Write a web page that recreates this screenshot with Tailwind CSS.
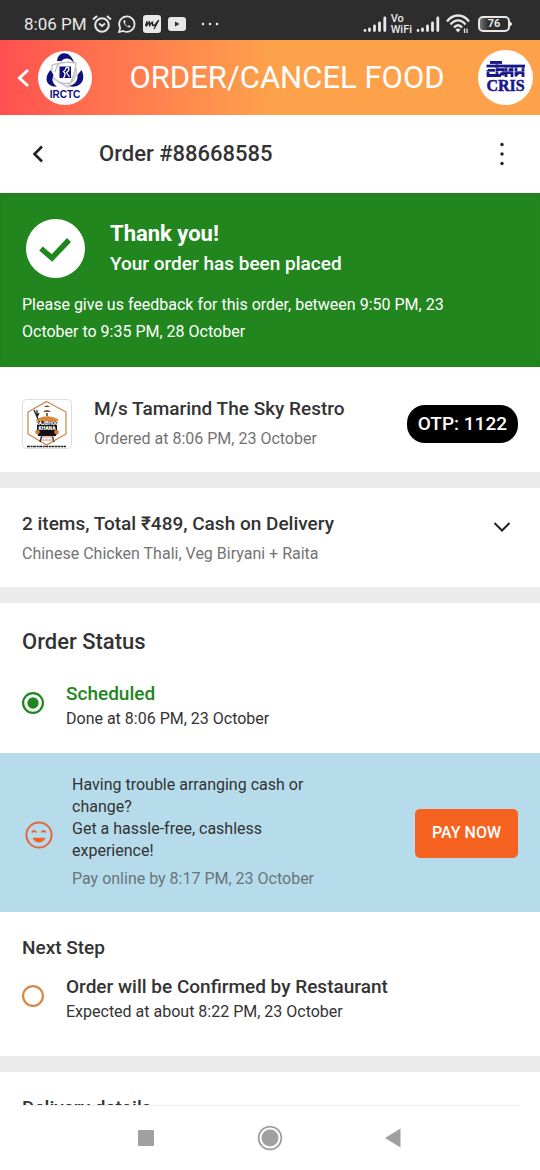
<!DOCTYPE html>
<html lang="en">
<head>
<meta charset="utf-8">
<meta name="viewport" content="width=device-width, initial-scale=1">
<title>Order #88668585</title>
<script src="https://cdn.jsdelivr.net/npm/@tailwindcss/browser@4"></script>
</head>
<body class="flex h-screen flex-col overflow-hidden bg-white font-['Roboto',sans-serif] text-base text-[#333]">

<div class="flex h-10 shrink-0 items-center justify-between bg-[#2d2d2d] pt-2 pr-7 pl-6 text-[#e8e8e8]">
  <div class="flex items-center gap-[5px]">
    <span class="text-[17px] leading-6">8:06 PM</span>
    <svg class="h-5 w-5" viewBox="0 0 20 20" fill="none" stroke="currentColor" stroke-width="2"><circle cx="10" cy="11" r="6.8"/><path d="M1 5.500 5 2M19 5.500 15 2"/><path d="M7 9.500 10 12 13 9.500" stroke-width="1.800"/></svg>
    <svg class="h-5 w-5" viewBox="0 0 20 20" fill="none" stroke="currentColor" stroke-width="1.700"><path d="M2 18 3.200 14A7.700 7.700 0 1 1 6.200 16.900Z"/><path d="M7.200 6C5.500 7.500 7 10 8.700 11.600C10.500 13.300 12.700 14.300 13.900 12.600L11.900 11.200 10.900 12.100C9.500 11.500 8.500 10.500 7.900 9.200L8.600 8.200 8 6Z" fill="currentColor" stroke="none"/></svg>
    <svg class="h-5 w-5" viewBox="0 0 20 20"><rect x="1" y="1" width="18" height="18" rx="3" fill="#e8e8e8"/><path d="M3.500 12 5 7.500 4.500 12 7.500 7.500 7.500 12 10 8M10.500 7.500 10.500 11.500 13 11 16.500 6.500 12 15" fill="none" stroke="#222" stroke-width="1.300" stroke-linejoin="round"/></svg>
    <svg class="h-5 w-5" viewBox="0 0 20 20"><rect x="1" y="3" width="18" height="14" rx="3" fill="#e8e8e8"/><path d="M8 7.500 12.500 10 8 12.500Z" fill="#2d2d2d"/></svg>
    <svg class="ml-2 h-5 w-5" viewBox="0 0 20 20" fill="currentColor"><circle cx="3" cy="10" r="1.300"/><circle cx="10" cy="10" r="1.300"/><circle cx="17" cy="10" r="1.300"/></svg>
  </div>
  <div class="flex items-center gap-1">
    <svg class="h-5 w-6" viewBox="0 0 24 20" stroke="currentColor" stroke-width="2.800" stroke-linecap="round"><path d="M2 16.500v.1M6.500 16.500v-1.500M11.500 16.500v-4.500M16.500 16.500V9M21.800 16.500V4"/></svg>
    <div class="flex flex-col text-[11px] leading-[11px] font-medium"><span>Vo</span><span>WiFi</span></div>
    <svg class="h-5 w-6" viewBox="0 0 24 20" stroke="currentColor" stroke-width="2.800" stroke-linecap="round"><path d="M2 16.500v.1M6.500 16.500v-1.500M11.500 16.500v-4.500M16.500 16.500V9M21.800 16.500V4"/></svg>
    <svg class="ml-0.5 h-5 w-6" viewBox="0 0 24 20" fill="none" stroke="currentColor" stroke-width="2.300"><path d="M1 7.500C7-.500 17-.500 23 7.500M4.500 10.500C9 5 15 5 19.500 10.500M8 13.500C10.500 10.500 13.500 10.500 16 13.500"/><path d="M9.500 15.500Q12 13.500 14.500 15.500L12 18.500Z" fill="currentColor" stroke="none"/><path d="M18.500 14.500v4.500M21 14.500v4.500" stroke-width="1.300"/></svg>
    <div class="ml-1 flex items-center"><span class="flex h-4 w-8 items-center justify-center rounded-[5px] border-2 border-[#e8e8e8] bg-gradient-to-r from-[#777] to-[#2d2d2d] to-30% text-[11px] leading-3 font-bold">76</span><span class="h-1 w-0.5 rounded-r bg-[#e8e8e8]"></span></div>
  </div>
</div>

<header class="flex h-[75px] shrink-0 items-center bg-gradient-to-r from-[#ff4f4f] to-[#fda14b] to-50% pr-[7px] pl-4 text-white">
  <button aria-label="Back" class="shrink-0"><svg class="h-5 w-4" viewBox="0 0 16 20" fill="none" stroke="currentColor" stroke-width="3"><path d="M12 2 3.500 10 12 18"/></svg></button>
  <svg class="ml-1.5 h-[54px] w-[54px] shrink-0" viewBox="0 0 54 54" role="img" aria-label="IRCTC">
    <circle cx="27" cy="27" r="27" fill="#fff"/>
    <g fill="none" stroke="#c4c4ce" stroke-width="1.500"><path d="M14 14Q26 10 38 12Q37 25 30 36Q20 32 14 25Q14 19 14 14M24 10.500Q19 13 17 21M38 17Q40 24 33 32M17 28Q24 34 31 32"/></g>
    <g fill="#10107c"><path d="M19 10C20-.5 33-.5 36 12C32 6 26 6.500 23.500 10Z"/><path d="M43.500 19C49 30 41 38 31 35C37 33.500 40 30 39.500 24Z"/><path d="M12.500 19C5.500 27 8 36 19 35.500C14.500 32.500 13.500 29 15.500 24Z"/><rect x="21.500" y="15.500" width="11.500" height="11.500"/></g>
    <path d="M28 16.500H30.500Q32 19 28.500 21.500L31.500 26M28 16.500Q28 19 25.500 20.500Q28.500 23 25.500 27" fill="none" stroke="#fff" stroke-width="1.300"/>
    <text x="27" y="47" text-anchor="middle" font-family="Liberation Sans, sans-serif" font-size="10" font-weight="700" fill="#10107c">IRCTC</text>
  </svg>
  <h1 class="flex-1 pl-1 text-center text-[31px] leading-10 whitespace-nowrap">ORDER/CANCEL FOOD</h1>
  <svg class="h-[55px] w-[55px] shrink-0" viewBox="0 0 55 55" role="img" aria-label="CRIS">
    <circle cx="27.500" cy="27.500" r="27.500" fill="#fff"/>
    <g fill="none" stroke="#17178a" stroke-width="2.800"><path d="M8.500 16H47M12 12.500H24M10 20.500H17M10 20V25.500H23M19 13V27M19 19.500H25V24H22M28 16V27M24 22.500H32V18M34 16V27M38 17V22.500H45M45 16V27M37 26 41 22.500"/></g>
    <path d="M8 14.300H47M8 18H47M8 21.700H47" stroke="#fff" stroke-width=".4"/>
    <text x="27.500" y="41" text-anchor="middle" font-family="Liberation Serif, serif" font-size="16" font-weight="700" fill="#17178a" stroke="#17178a" stroke-width=".5">CRIS</text>
  </svg>
</header>

<div class="flex h-[78px] shrink-0 items-center pr-7 pl-7">
  <button aria-label="Back to orders"><svg class="h-5 w-5" viewBox="0 0 20 20" fill="none" stroke="#222" stroke-width="2.600"><path d="M14 2.500 6.500 10 14 17.500"/></svg></button>
  <h2 class="ml-[51px] flex-1 text-[22px] leading-7 font-medium">Order #88668585</h2>
  <button aria-label="More options"><svg class="h-6 w-5" viewBox="0 0 20 24" fill="#222"><circle cx="10" cy="2.500" r="1.700"/><circle cx="10" cy="12" r="1.700"/><circle cx="10" cy="21.500" r="1.700"/></svg></button>
</div>

<main class="flex min-h-0 flex-1 flex-col overflow-hidden *:shrink-0">
  <section class="bg-[#22861f] px-[22px] pt-[25px] pb-[22px] text-white inset-shadow-sm">
    <div class="flex items-center gap-[25px]">
      <svg class="ml-1 h-[59px] w-[59px]" viewBox="0 0 59 59"><circle cx="29.500" cy="29.500" r="29.500" fill="#fff"/><path d="M15 29.500 26 39 43 21" fill="none" stroke="#22861f" stroke-width="5.500"/></svg>
      <div>
        <h3 class="text-[22px] leading-8 font-bold">Thank you!</h3>
        <p class="text-[19px] leading-7 font-medium">Your order has been placed</p>
      </div>
    </div>
    <p class="mt-[13px] max-w-[460px] leading-[27px]">Please give us feedback for this order, between 9:50 PM, 23 October to 9:35 PM, 28 October</p>
  </section>

  <section class="flex items-center px-[22px] pt-[27px] pb-[19px]">
    <svg class="h-[50px] w-[50px] shrink-0" viewBox="0 0 50 50" role="img" aria-label="Restaurant logo">
      <rect x=".5" y=".5" width="49" height="49" rx="4" fill="#fff" stroke="#ddd"/>
      <path d="M24.500 2.500 44 13V35L24.500 46 6 35V13Z" fill="none" stroke="#c98247" stroke-width="1.200"/>
      <path d="M22 8Q25 5 28 8Z" fill="#70351f"/><path d="M21 13Q25 9 29 13Z" fill="#8a4a2c"/><path d="M25 14V17" stroke="#54803a" stroke-width="2"/>
      <path d="M14 21Q24 14 36 20V24H14Z" fill="#e08632"/>
      <path d="M15 22H35V31H36L34 37H16L15 31Z" fill="#15100f"/>
      <path d="M12 11 16 20M15 11V17M17 14 15 18" stroke="#222" stroke-width="1.300"/>
      <circle cx="15.500" cy="33" r="2.300" fill="#d37a35"/><circle cx="34.500" cy="33" r="2.300" fill="#d37a35"/>
      <path d="M20 36 18 43M30 36 32 43" stroke="#333" stroke-width="1.500"/><path d="M20 38H31M19 41H32" stroke="#c98b80"/>
      <text x="25" y="26" text-anchor="middle" font-family="Roboto, sans-serif" font-size="5" font-weight="900" fill="#fff">RAJBHOG</text>
      <text x="25" y="31" text-anchor="middle" font-family="Roboto, sans-serif" font-size="5" font-weight="900" fill="#fff">KHANA</text>
      <path d="M5 47.500H44" stroke="#222" stroke-width="1.600" stroke-dasharray="3 .6 2 .5"/>
    </svg>
    <div class="ml-[22px] flex-1">
      <h3 class="text-[19px] leading-[30px] font-medium">M/s Tamarind The Sky Restro</h3>
      <p class="leading-[29px] text-[#737373]">Ordered at 8:06 PM, 23 October</p>
    </div>
    <span class="rounded-[18px] bg-black px-[11px] py-[5px] text-[19px] leading-7 font-medium text-white">OTP: 1122</span>
  </section>

  <div class="h-4 bg-[#ebebeb]"></div>

  <section class="flex items-center px-[22px] pt-[21px] pb-[19px]">
    <div class="flex-1">
      <h3 class="text-[19px] leading-[30px] font-medium">2 items, Total ₹489, Cash on Delivery</h3>
      <p class="leading-[29px] text-[#737373]">Chinese Chicken Thali, Veg Biryani + Raita</p>
    </div>
    <button aria-label="Show items" class="mr-[7px] mb-6"><svg class="h-4 w-[18px]" viewBox="0 0 18 16" fill="none" stroke="#222" stroke-width="2"><path d="M1.500 4 9 11.500 16.500 4"/></svg></button>
  </section>

  <div class="h-4 bg-[#ebebeb]"></div>

  <section class="px-[22px] pt-[24px] pb-[22px]">
    <h3 class="text-[22px] leading-[30px] font-medium">Order Status</h3>
    <div class="mt-6 flex items-center gap-[22px]">
      <svg class="mb-[7px] h-[22px] w-[22px] shrink-0" viewBox="0 0 22 22"><circle cx="11" cy="11" r="9.900" fill="none" stroke="#22861f" stroke-width="2.200"/><circle cx="11" cy="11" r="5.700" fill="#22861f"/></svg>
      <div>
        <h4 class="text-[19px] leading-[26px] font-medium text-[#22861f]">Scheduled</h4>
        <p class="leading-6">Done at 8:06 PM, 23 October</p>
      </div>
    </div>
  </section>

  <section class="flex items-center bg-[#b6dceb] px-[22px] pt-[21px] pb-5">
    <svg class="ml-[3px] mt-1 h-7 w-7 shrink-0" viewBox="0 0 28 28" fill="none" stroke="#e3673b" stroke-width="2"><circle cx="14" cy="14" r="12.600"/><path d="M6.800 11.500Q9 8.500 11.200 11.500M16.300 11.500Q18.500 8.500 20.700 11.500" stroke-width="1.800"/><path d="M7.500 16.800H20.500Q18.500 21.500 14 21.500T7.500 16.800Z" fill="#f4622a" stroke="none"/></svg>
    <div class="ml-[19px] flex-1">
      <p class="max-w-[270px] leading-[22px]">Having trouble arranging cash or change?<br>Get a hassle-free, cashless experience!</p>
      <p class="mt-[3px] leading-[27px] text-[#6b7478]">Pay online by 8:17 PM, 23 October</p>
    </div>
    <button class="h-[49px] rounded-[5px] bg-[#f66321] px-[17px] font-medium text-white">PAY NOW</button>
  </section>

  <section class="px-[22px] pt-[22px] pb-8">
    <h3 class="text-[19px] leading-7 font-medium">Next Step</h3>
    <div class="mt-3 flex items-center gap-[22px]">
      <svg class="mb-[7px] h-[22px] w-[22px] shrink-0" viewBox="0 0 22 22"><circle cx="11" cy="11" r="9.900" fill="none" stroke="#d8883f" stroke-width="2.200"/></svg>
      <div>
        <h4 class="text-[19px] leading-[26px] font-medium">Order will be Confirmed by Restaurant</h4>
        <p class="leading-6">Expected at about 8:22 PM, 23 October</p>
      </div>
    </div>
  </section>

  <div class="h-4 bg-[#ebebeb]"></div>

  <section class="px-[22px] pt-[22px]">
    <h3 class="text-[19px] leading-7 font-medium">Delivery details</h3>
  </section>
</main>

<nav aria-label="System" class="shrink-0 bg-white">
  <div class="mx-5 border-t border-[#eee]"></div>
  <div class="flex h-16 items-center justify-center gap-[98px]">
    <button aria-label="Recent apps"><svg class="h-[26px] w-[26px]" viewBox="0 0 26 26"><rect x="5" y="5" width="16" height="16" rx="1" fill="#a0a0a0"/></svg></button>
    <button aria-label="Home"><svg class="h-[26px] w-[26px]" viewBox="0 0 26 26"><circle cx="13" cy="13" r="11.400" fill="none" stroke="#a0a0a0" stroke-width="1.800"/><circle cx="13" cy="13" r="8.500" fill="#a0a0a0"/></svg></button>
    <button aria-label="Go back"><svg class="h-[26px] w-[26px]" viewBox="0 0 26 26"><path d="M4 13 19.500 3.500V22.500Z" fill="#a0a0a0"/></svg></button>
  </div>
</nav>
</body>
</html>
